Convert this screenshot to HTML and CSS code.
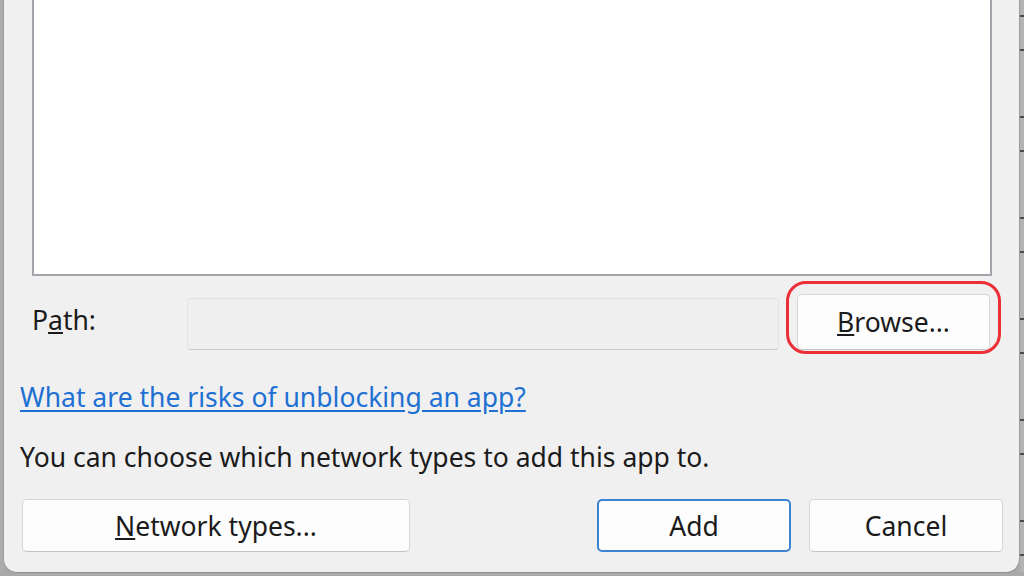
FILE: index.html
```html
<!DOCTYPE html>
<html lang="en">
<head>
    <meta charset="UTF-8">
    <meta name="viewport" content="width=device-width, initial-scale=1.0">
    <title>Add an app</title>
    <link rel="stylesheet" href="styles.css">
</head>
<body>
    <div class="screen">
        <div class="edge edge-left"></div>

        <div class="dialog">
            <div class="app-list"></div>

            <div class="path-row">
                <label class="path-label" for="pathInput">P<u>a</u>th:</label>
                <input class="path-input" id="pathInput" type="text" readonly>
                <div class="browse-wrap">
                    <button class="btn btn-browse"><u>B</u>rowse...</button>
                    <span class="highlight-ring"></span>
                </div>
            </div>

            <a class="risk-link" href="#">What are the risks of unblocking an app?</a>

            <p class="hint">You can choose which network types to add this app to.</p>

            <div class="button-row">
                <button class="btn btn-network"><u>N</u>etwork types...</button>
                <div class="button-group">
                    <button class="btn btn-primary">Add</button>
                    <button class="btn">Cancel</button>
                </div>
            </div>
        </div>

        <div class="edge edge-right"></div>
    </div>
</body>
</html>
```

FILE: styles.css
```css
* {
    margin: 0;
    padding: 0;
    box-sizing: border-box;
    font-family: 'Noto Sans', 'Open Sans', sans-serif;
}

body {
    width: 1024px;
    height: 576px;
    overflow: hidden;
    background: #a9a9a9;
}

.screen {
    display: flex;
    height: 576px;
    background: #a9a9a9;
}

/* window behind the dialog, only a sliver shows */
.edge {
    flex: none;
    height: 572px;
    background: #acacac;
}

.edge-left {
    width: 3px;
}

.edge-right {
    width: 4px;
    background:
        repeating-linear-gradient(180deg,
            transparent 0, transparent 15px,
            #4a4a4a 15px, #4a4a4a 17px,
            transparent 17px, transparent 49px,
            #4a4a4a 49px, #4a4a4a 51px,
            transparent 51px, transparent 101px),
        #b3b3b3;
}

.dialog {
    flex: none;
    width: 1017px;
    height: 573px;
    background: #f0f0f0;
    border-left: 1px solid #9c9c9c;
    border-right: 1px solid #9c9c9c;
    border-bottom: 1px solid #8f8f8f;
    border-radius: 0 0 14px 14px;
    display: flex;
    flex-direction: column;
    color: #1b1b1b;
}

.app-list {
    margin-left: 28px;
    width: 960px;
    height: 276px;
    background: #fff;
    border: 2px solid #a2a6aa;
    border-top: none;
}

.path-row {
    display: flex;
    align-items: flex-start;
    margin-top: 18px;
    margin-left: 28px;
    height: 56px;
}

.path-label {
    width: 155px;
    font-size: 26.5px;
    line-height: 52px;
}

.path-input {
    width: 592px;
    height: 52px;
    margin-top: 4px;
    background: #efefef;
    border: 1px solid #e2e2e2;
    border-bottom-color: #c9c9c9;
    border-radius: 4px;
    outline: none;
}

.browse-wrap {
    position: relative;
    margin-left: 18px;
}

.btn {
    height: 56px;
    background: #fdfdfd;
    border: 1px solid #d6d6d6;
    border-bottom-color: #c3c3c3;
    border-radius: 5px;
    font-size: 26.5px;
    color: #1b1b1b;
}

.btn-browse {
    width: 193px;
}

.highlight-ring {
    position: absolute;
    top: -13px;
    left: -11px;
    right: -11px;
    bottom: -4px;
    border: 3px solid #ec2f37;
    border-radius: 20px;
}

.risk-link {
    margin-top: 29px;
    margin-left: 16px;
    align-self: flex-start;
    font-size: 26.5px;
    line-height: 36px;
    color: #1f70d3;
    text-decoration: underline;
    text-underline-offset: 3px;
}

.hint {
    margin-top: 24px;
    margin-left: 16px;
    font-size: 26.5px;
    line-height: 36px;
}

.button-row {
    display: flex;
    justify-content: space-between;
    margin-top: 24px;
    margin-left: 18px;
    margin-right: 16px;
}

.button-row .btn {
    height: 53px;
}

.btn-network {
    width: 388px;
}

.button-group {
    display: flex;
    gap: 18px;
}

.button-group .btn {
    width: 194px;
}

.btn-primary {
    border: 2px solid #3a84d3;
}
```
